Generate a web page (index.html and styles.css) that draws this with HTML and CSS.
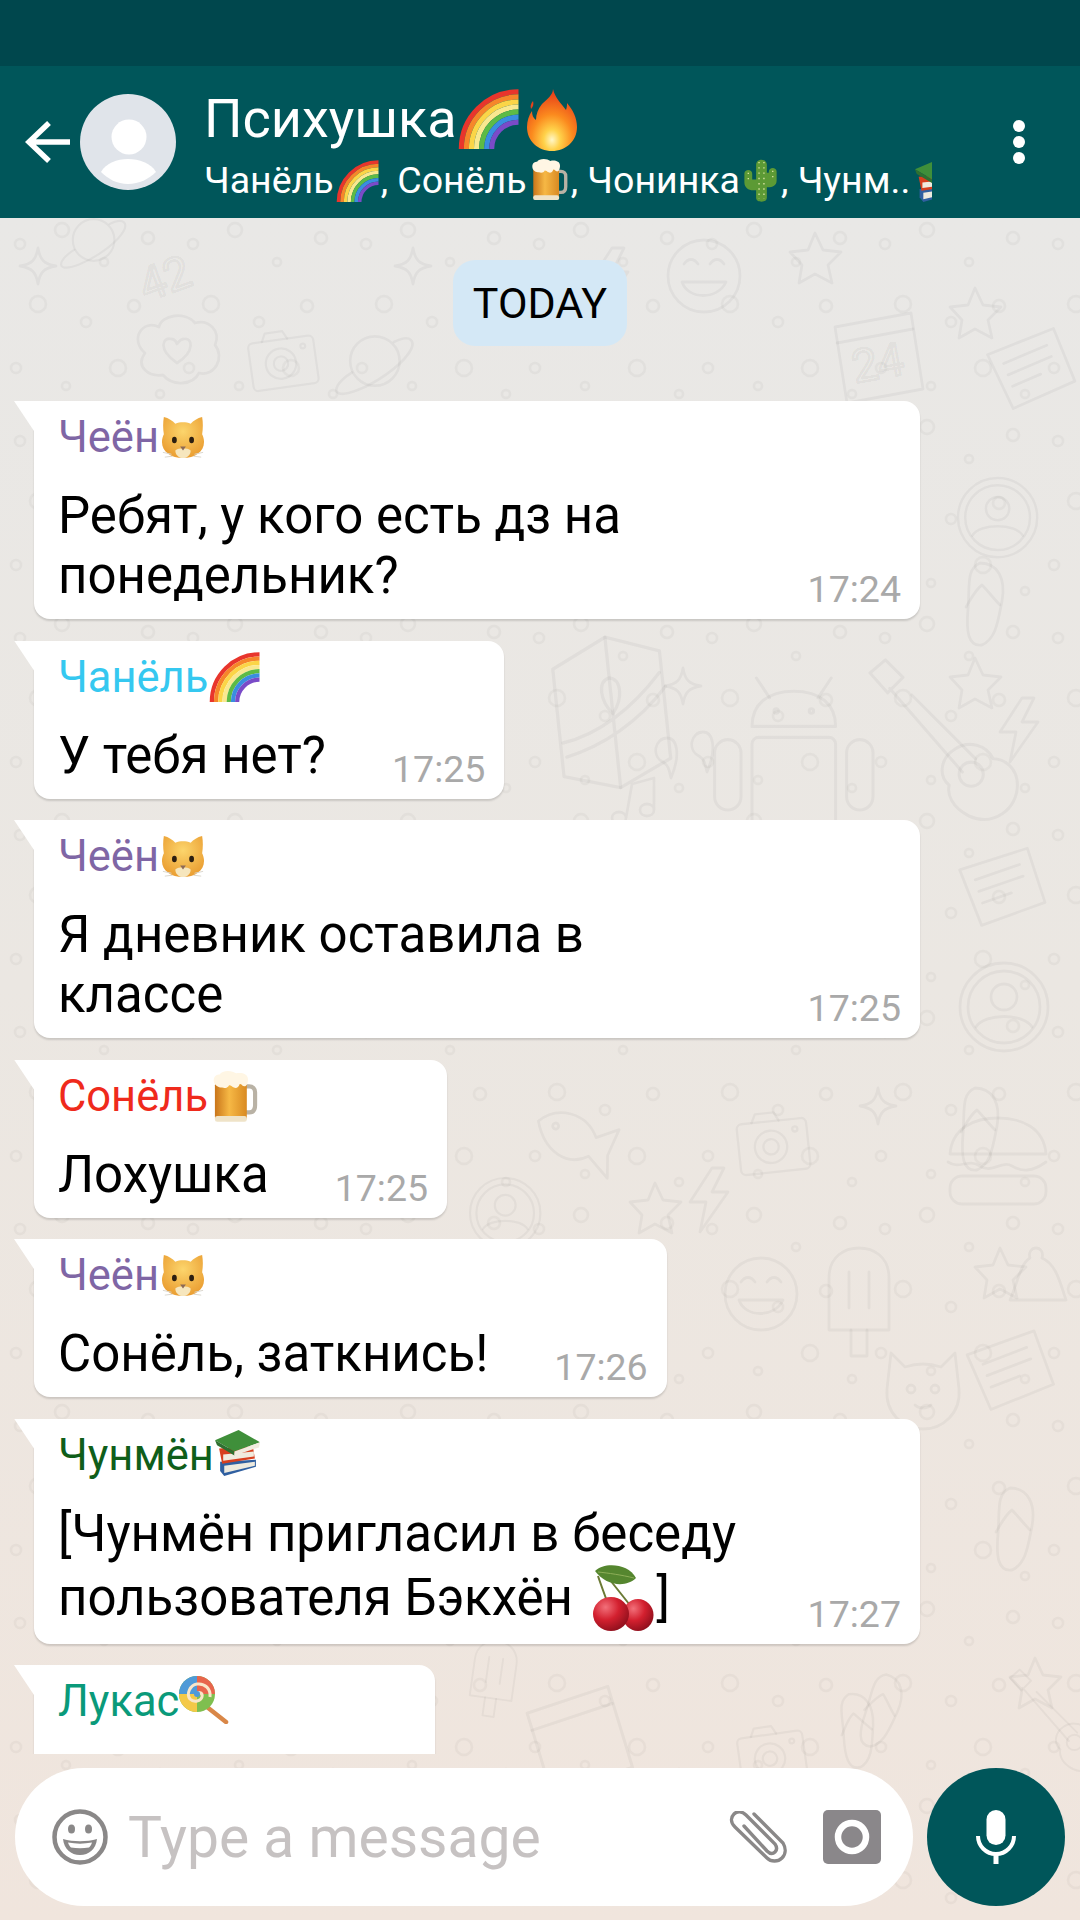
FILE: index.html
```html
<!DOCTYPE html>
<html lang="en">
<head>
  <meta charset="UTF-8" />
  <title>Психушка</title>
  <link rel="stylesheet" href="styles.css">
</head>
<body>

<!-- emoji drawn once, used everywhere -->
<svg class="sprite" xmlns="http://www.w3.org/2000/svg">
  <defs>
    <radialGradient id="g-fire" cx="50%" cy="82%" r="75%">
      <stop offset="0" stop-color="#fff7c8"/>
      <stop offset=".22" stop-color="#ffd24a"/>
      <stop offset=".55" stop-color="#fb8a1e"/>
      <stop offset="1" stop-color="#e8421a"/>
    </radialGradient>
    <linearGradient id="g-beer" x1="0" y1="0" x2="1" y2="0">
      <stop offset="0" stop-color="#c9751a"/>
      <stop offset=".45" stop-color="#f6b845"/>
      <stop offset="1" stop-color="#d98a22"/>
    </linearGradient>
    <radialGradient id="g-cat" cx="50%" cy="35%" r="70%">
      <stop offset="0" stop-color="#fcd56c"/>
      <stop offset="1" stop-color="#e99a2e"/>
    </radialGradient>
    <radialGradient id="g-cherry" cx="35%" cy="30%" r="75%">
      <stop offset="0" stop-color="#f2707a"/>
      <stop offset=".5" stop-color="#d3202f"/>
      <stop offset="1" stop-color="#8e0f1c"/>
    </radialGradient>
    <symbol id="e-rainbow" viewBox="0 0 64 64">
      <g fill="none" stroke-width="5.400">
        <path stroke="#e8352c" d="M3 64A61 61 0 0 1 64 3"/>
        <path stroke="#f6862a" d="M8.400 64A55.600 55.600 0 0 1 64 8.400"/>
        <path stroke="#fbd547" d="M13.800 64A50.200 50.200 0 0 1 64 13.800"/>
        <path stroke="#f9e88f" d="M19.200 64A44.800 44.800 0 0 1 64 19.200"/>
        <path stroke="#5dbb45" d="M24.600 64A39.400 39.400 0 0 1 64 24.600"/>
        <path stroke="#3a8ee0" d="M30 64A34 34 0 0 1 64 30"/>
        <path stroke="#7a4bc8" d="M35.400 64A28.600 28.600 0 0 1 64 35.400"/>
      </g>
    </symbol>
    <symbol id="e-fire" viewBox="0 0 50 62">
      <path fill="url(#g-fire)" d="M26 0c2 9 8 14 13 21 1-3 1-5 1-7 6 7 10 15 10 24 0 14-11 24-25 24S0 52 0 38c0-6 2-12 5-16 0 4 1 7 4 9 0-6 2-11 6-16 5-5 11-9 11-15z"/>
      <path fill="#e8421a" d="M6 12c1 3 0 6-2 8-1-3 0-6 2-8z"/>
    </symbol>
    <symbol id="e-beer" viewBox="0 0 38 44">
      <path fill="none" stroke="#b9b2a5" stroke-width="3.500" d="M27 13h4c3 0 5 2 5 5v11c0 4-2 6-5 6h-4"/>
      <rect x="2" y="9" width="27" height="33" rx="3" fill="url(#g-beer)"/>
      <rect x="2" y="38" width="27" height="5" rx="2" fill="#efe3c8"/>
      <path fill="#fff6e4" d="M1 8c0-4 3-5 5-5 1-2 4-3 7-3 3 0 5 1 7 2 4-1 10 0 10 5 0 3-1 6-3 6-2 0-2-2-4-2-1 3-3 4-5 3-2-1-2-2-4-2-1 2-3 3-6 2-3 0-7-2-7-6z"/>
    </symbol>
    <symbol id="e-cactus" viewBox="0 0 34 44">
      <path fill="#5c9a35" d="M12 6c0-7 11-7 11 0v8l2 0v-1c0-5 8-5 8 0v9c0 5-4 7-9 7h-1v11c0 5-11 5-11 0v-8h-3c-5 0-9-3-9-8v-9c0-5 8-5 8 0v6l4 0z"/>
      <path fill="none" stroke="#d8e4a0" stroke-width="1.400" stroke-dasharray="1.400 4" d="M15 3v38M20 3v38M4 14v10M29 12v10"/>
    </symbol>
    <symbol id="e-books" viewBox="0 0 45 45">
      <path fill="#2f5fa0" d="M6 31 41 29 41 36 10 45 6 40z"/>
      <path fill="#eeeade" d="M10 35 40 31 40 35 10 42z"/>
      <path fill="#d8401f" d="M5 18 38 16 40 28 8 33z"/>
      <path fill="#f0ecdf" d="M9 24 39 21 39 26 9 30z"/>
      <path fill="#3f8f3a" d="M1 10 24 0 45 12 20 21z"/>
      <path fill="#2f7030" d="M1 10 20 21 20 25 3 15z"/>
      <path fill="#f0ecdf" d="M20 21 45 12 44 17 20 25z"/>
    </symbol>
    <symbol id="e-cat" viewBox="0 0 46 48">
      <path fill="url(#g-cat)" d="M3 2c5 1 9 4 12 7 5-2 11-2 16 0 3-3 7-6 12-7 1 6 1 12 0 18 1 2 2 5 2 8 0 11-10 17-22 17S1 39 1 28c0-3 1-6 2-8-1-6-1-12 0-18z"/>
      <ellipse cx="14" cy="26" rx="2.500" ry="3.400" fill="#2c1e10"/>
      <ellipse cx="32" cy="26" rx="2.500" ry="3.400" fill="#2c1e10"/>
      <path fill="#f6e6bd" d="M15 37c3-3 13-3 16 0 0 5-4 8-8 8s-8-3-8-8z"/>
      <path fill="#8c6b58" d="M20 33h6l-3 4z"/>
      <path fill="none" stroke="#d9d5cc" stroke-width="1" d="M2 39l9 2M44 39l-9 2M4 44l8-1M42 44l-8-1"/>
    </symbol>
    <symbol id="e-cherry" viewBox="0 0 62 67">
      <path fill="none" stroke="#6b7a35" stroke-width="2" d="M6 12c4 12 8 22 11 31M18 16c8 10 16 20 23 29"/>
      <path fill="#55862f" d="M3 7C12-2 36-1 44 14 34 24 14 22 3 7z"/>
      <path fill="none" stroke="#8dae58" stroke-width="1" d="M6 8c10 1 24 3 36 6"/>
      <ellipse cx="46" cy="51" rx="15.500" ry="16" fill="url(#g-cherry)"/>
      <ellipse cx="19" cy="50" rx="18" ry="17" fill="url(#g-cherry)"/>
    </symbol>
    <symbol id="e-lolly" viewBox="0 0 50 48">
      <path stroke="#d98748" stroke-width="4.500" stroke-linecap="round" d="M28 31 47 46"/>
      <circle cx="18" cy="18" r="18" fill="#7fbf4f"/>
      <path fill="#e8654c" d="M18 0a18 18 0 0 1 18 18H18z"/>
      <path fill="#f4c948" d="M18 36A18 18 0 0 1 0 18h18z"/>
      <path fill="#4f9ad8" d="M0 18A18 18 0 0 1 18 0v18z"/>
      <path fill="none" stroke="#f9e6c9" stroke-width="3" d="M18 18c2-3 6-1 5 3-1 4-8 6-12 2-4-5 0-14 7-15 8-1 14 5 13 13"/>
      <circle cx="18" cy="18" r="3" fill="#4f9ad8"/>
    </symbol>
  </defs>
</svg>

<div class="status-bar"></div>

<header class="app-bar">
  <svg class="back" viewBox="0 0 45 44"><path fill="none" stroke="#fff" stroke-width="5.500" d="M24 3 4 22l20 19M4 22h41"/></svg>
  <svg class="avatar" viewBox="0 0 96 96">
    <circle cx="48" cy="48" r="48" fill="#e0e4ea"/>
    <circle cx="49" cy="43" r="17.500" fill="#fff"/>
    <path fill="#fff" d="M21 78c5-9 16-13 27-13s23 4 28 13c-7 7-17 12-28 12s-20-5-27-12z"/>
  </svg>
  <div class="titles">
    <div class="title">Психушка<svg class="emoji e-title-rainbow"><use href="#e-rainbow"/></svg><svg class="emoji e-title-fire"><use href="#e-fire"/></svg></div>
    <div class="subtitle">Чанёль<svg class="emoji e-sub"><use href="#e-rainbow"/></svg>, Сонёль<svg class="emoji e-sub e-sub-beer"><use href="#e-beer"/></svg>, Чонинка<svg class="emoji e-sub e-sub-cactus"><use href="#e-cactus"/></svg>, Чунм..<svg class="emoji e-sub e-sub-books"><use href="#e-books"/></svg></div>
  </div>
  <svg class="menu" viewBox="0 0 14 44" fill="#fff"><circle cx="7" cy="6" r="6"/><circle cx="7" cy="22" r="6"/><circle cx="7" cy="38" r="6"/></svg>
</header>

<main class="chat">
  <!-- wallpaper doodles -->
  <svg class="wallpaper" viewBox="0 0 1080 1702">
    <defs>
      <pattern id="dots" width="173" height="197" patternUnits="userSpaceOnUse">
        <g fill="none" stroke="#000" stroke-opacity=".036" stroke-width="2.500">
          <circle cx="20" cy="26" r="5"/><circle cx="62" cy="12" r="7"/><circle cx="104" cy="44" r="4"/>
          <circle cx="148" cy="20" r="6"/><circle cx="38" cy="86" r="8"/><circle cx="86" cy="104" r="5"/>
          <circle cx="134" cy="88" r="6"/><circle cx="16" cy="150" r="5"/><circle cx="66" cy="168" r="4"/>
          <circle cx="118" cy="150" r="8"/><circle cx="160" cy="176" r="4"/>
        </g>
      </pattern>
      <g id="d-camera"><rect x="0" y="14" width="82" height="60" rx="6"/><path d="M18 14l5-10h22l5 10"/><circle cx="38" cy="44" r="19"/><circle cx="38" cy="44" r="9"/><circle cx="68" cy="26" r="3"/></g>
      <g id="d-android"><path d="M20 44c0-20 14-32 38-32s38 12 38 32z"/><path d="M36 18 24 0M80 18 92 0"/><circle cx="42" cy="30" r="2"/><circle cx="74" cy="30" r="2"/><rect x="20" y="54" width="76" height="86" rx="6"/><rect x="-14" y="56" width="24" height="64" rx="12"/><rect x="106" y="56" width="24" height="64" rx="12"/></g>
      <g id="d-guitar"><path d="M0 0l14-12 16 16-14 14zM18 14l66 76"/><path d="M38 20 96 78"/><path d="M76 70c14-10 30-4 36 8 10 0 22 8 22 24 0 22-22 38-44 28-16-8-20-20-18-28-10-8-8-24 4-32z"/><circle cx="92" cy="92" r="11"/></g>
      <g id="d-map"><path d="M0 22 46 0l44 16 0 90-44 20L0 112z"/><path d="M46 0v126M2 84c30-4 60-22 86-50M4 96c30-6 62-22 88-50"/><path d="M46 64c-10-12-10-28 0-30 10 2 10 18 0 30z"/></g>
      <g id="d-star"><path d="M25 0l8 17 18 2-13 13 4 18-17-9-16 9 3-18L0 19l18-2z"/></g>
      <g id="d-spark"><path d="M18 0c2 12 6 16 18 18-12 2-16 6-18 18-2-12-6-16-18-18 12-2 16-6 18-18z"/></g>
      <g id="d-planet"><circle cx="42" cy="40" r="26"/><path d="M18 52C2 62-2 72 4 74c8 3 30-6 50-20s32-30 26-36c-3-3-10-2-18 2"/></g>
      <g id="d-heart"><path d="M10 40C-6 26 8 6 24 14c2-12 26-16 36-4 14-4 26 8 20 22 10 12 0 32-16 28-6 12-26 14-36 2C14 64 0 54 10 40z"/><path d="M42 50c-20-14-14-26-6-24 3 0 5 2 6 5 2-3 4-5 7-5 8-2 12 12-7 24z"/></g>
      <g id="d-smile"><circle cx="36" cy="36" r="36"/><path d="M14 42c6 18 36 18 44 0zM16 24c4-6 10-6 14 0M42 24c4-6 10-6 14 0"/></g>
      <g id="d-cal"><path d="M0 14 76 0l12 76-76 14z"/><path d="M2 30 78 16"/></g>
      <g id="d-burger"><path d="M0 36C2 10 24 0 48 0s46 10 48 36z"/><path d="M-2 44c12 8 20-4 32 4s22-6 32 0 20 6 34-4"/><rect x="0" y="58" width="96" height="28" rx="12"/></g>
      <g id="d-card"><path d="M0 12 70 0l10 56-66 14z"/><path d="M14 24l46-9M16 36l46-9M18 48l30-6"/></g>
      <g id="d-bolt"><path d="M22 0 0 34h16l-6 30 28-40H22l12-24z"/></g>
      <g id="d-ring"><circle cx="44" cy="44" r="44"/><circle cx="44" cy="44" r="36"/><circle cx="44" cy="34" r="13"/><path d="M16 64c8-14 48-14 56 0"/></g>
      <g id="d-flip"><path d="M30 0c18 0 26 16 22 38-4 20-6 38-20 44-14 2-16-14-14-36C20 22 16 6 30 0z"/><path d="M16 44c6-10 10-18 16-22 6 6 12 14 18 20"/></g>
      <g id="d-fish"><path d="M0 24C14 4 44 2 60 24l20-14-4 28 6 22-24-16C40 60 14 52 0 24z"/><circle cx="18" cy="24" r="3"/></g>
      <g id="d-pop"><path d="M4 30C4 8 20 0 34 0s30 8 30 30v52H4z"/><path d="M26 82v26h16V82M24 24v36M44 24v36"/></g>
      <g id="d-note"><path d="M0 40c0-8 14-8 14 0s-14 8-14 0zM28 32c0-8 14-8 14 0s-14 8-14 0zM14 40 20 6 42 0 42 32"/></g>
      <g id="d-bell"><path d="M26 0c4 0 8 4 6 10 14 6 18 24 24 42H0C8 34 10 16 20 10 18 4 22 0 26 0z"/></g>
      <g id="d-cat"><path d="M6 0l14 14c12-4 24-4 36 0L70 0l4 36c2 24-16 40-36 40S0 60 2 36z"/><circle cx="26" cy="36" r="4"/><circle cx="50" cy="36" r="4"/><path d="M30 52c4 4 12 4 16 0"/></g>
      <g id="d-quote"><path d="M12 0c10 0 14 16 4 40-2-8-2-12-8-16-12-6-8-24 4-24zM48 -6c10 0 14 16 4 40-2-8-2-12-8-16-12-6-8-24 4-24z"/></g>
    </defs>
    <rect width="1080" height="1702" fill="url(#dots)"/>
    <g fill="none" stroke="#000" stroke-opacity=".038" stroke-width="2.800" stroke-linejoin="round" stroke-linecap="round">
      <use href="#d-spark" x="20" y="30"/>
      <use href="#d-heart" transform="translate(135 95)"/>
      <use href="#d-camera" transform="translate(246 115) rotate(-8) scale(.8)"/>
      <use href="#d-planet" transform="translate(335 105) scale(.95)"/>
      <use href="#d-spark" transform="translate(395 30)"/>
      <use href="#d-smile" transform="translate(668 22)"/>
      <use href="#d-cal" transform="translate(835 95)"/>
      <use href="#d-star" transform="translate(950 70)"/>
      <use href="#d-card" transform="translate(985 125) rotate(-12)"/>
      <use href="#d-planet" transform="translate(60 -10) scale(.8)"/>
      <use href="#d-card" transform="translate(500 50) rotate(12) scale(.8)"/>
      <use href="#d-bolt" transform="translate(590 30)"/>
      <use href="#d-star" transform="translate(790 15)"/>
      <text x="146" y="84" font-family="Roboto, sans-serif" font-size="46" transform="rotate(-20 146 84)">42</text>
      <text x="855" y="165" font-family="Roboto, sans-serif" font-size="46" transform="rotate(-10 855 165)">24</text>

      <use href="#d-ring" transform="translate(958 260) scale(.9)"/>
      <use href="#d-flip" transform="translate(950 345)"/>

      <use href="#d-map" transform="translate(550 425) rotate(-6) scale(1.2)"/>
      <use href="#d-android" transform="translate(730 460) scale(1.1)"/>
      <use href="#d-guitar" transform="translate(870 455) scale(1.1)"/>
      <use href="#d-quote" transform="translate(655 520)"/>
      <use href="#d-note" transform="translate(612 560)"/>
      <use href="#d-spark" transform="translate(665 450)"/>
      <use href="#d-star" transform="translate(950 440)"/>
      <use href="#d-bolt" transform="translate(1000 480)"/>

      <use href="#d-card" transform="translate(958 640) rotate(-8)"/>
      <use href="#d-ring" transform="translate(960 745)"/>
      <use href="#d-flip" transform="translate(945 870)"/>

      <use href="#d-fish" transform="translate(545 880) rotate(16)"/>
      <use href="#d-camera" transform="translate(735 895) rotate(-6) scale(.85)"/>
      <use href="#d-burger" transform="translate(950 900)"/>
      <use href="#d-spark" transform="translate(860 870)"/>
      <use href="#d-ring" transform="translate(470 960) scale(.8)"/>
      <use href="#d-star" transform="translate(630 965)"/>
      <use href="#d-bolt" transform="translate(690 950)"/>

      <use href="#d-pop" transform="translate(825 1030)"/>
      <use href="#d-smile" transform="translate(725 1040)"/>
      <use href="#d-star" transform="translate(975 1030)"/>
      <use href="#d-cat" transform="translate(885 1135)"/>
      <use href="#d-card" transform="translate(965 1125) rotate(-10)"/>
      <use href="#d-flip" transform="translate(980 1270)"/>
      <use href="#d-bell" transform="translate(1010 1030)"/>

      <use href="#d-cal" transform="translate(525 1480) rotate(-8) scale(1.1)"/>
      <use href="#d-camera" transform="translate(735 1510) rotate(-8) scale(.8)"/>
      <use href="#d-flip" transform="translate(822 1480) rotate(-8) scale(.9)"/>
      <use href="#d-flip" transform="translate(860 1450) rotate(14) scale(.9)"/>
      <use href="#d-guitar" transform="translate(1010 1460) scale(.7)"/>
      <use href="#d-pop" transform="translate(475 1420) rotate(8) scale(.7)"/>
      <use href="#d-star" transform="translate(1010 1440)"/>
    </g>
  </svg>

  <div class="messages">
    <div class="day-chip">TODAY</div>

    <div class="bubble wide">
      <div class="sender purple">Чеён<svg class="emoji e-cat"><use href="#e-cat"/></svg></div>
      <div class="msg-row">
        <div class="msg-text">Ребят, у кого есть дз на<br>понедельник?</div>
        <span class="time">17:24</span>
      </div>
    </div>

    <div class="bubble">
      <div class="sender sky">Чанёль<svg class="emoji e-rainbow"><use href="#e-rainbow"/></svg></div>
      <div class="msg-row">
        <div class="msg-text">У тебя нет?</div>
        <span class="time">17:25</span>
      </div>
    </div>

    <div class="bubble wide">
      <div class="sender purple">Чеён<svg class="emoji e-cat"><use href="#e-cat"/></svg></div>
      <div class="msg-row">
        <div class="msg-text">Я дневник оставила в<br>классе</div>
        <span class="time">17:25</span>
      </div>
    </div>

    <div class="bubble">
      <div class="sender red">Сонёль<svg class="emoji e-beer"><use href="#e-beer"/></svg></div>
      <div class="msg-row">
        <div class="msg-text">Лохушка</div>
        <span class="time">17:25</span>
      </div>
    </div>

    <div class="bubble">
      <div class="sender purple">Чеён<svg class="emoji e-cat"><use href="#e-cat"/></svg></div>
      <div class="msg-row">
        <div class="msg-text">Сонёль, заткнись!</div>
        <span class="time">17:26</span>
      </div>
    </div>

    <div class="bubble wide">
      <div class="sender green">Чунмён<svg class="emoji e-books"><use href="#e-books"/></svg></div>
      <div class="msg-row">
        <div class="msg-text">[Чунмён пригласил в беседу<br>пользователя Бэкхён <svg class="cherry"><use href="#e-cherry"/></svg>]</div>
        <span class="time">17:27</span>
      </div>
    </div>

    <div class="bubble cut-off">
      <div class="sender teal">Лукас<svg class="emoji e-lolly"><use href="#e-lolly"/></svg></div>
    </div>
  </div>

  <div class="composer">
    <div class="input-pill">
      <svg class="icon-smile" viewBox="0 0 56 56">
        <circle cx="28" cy="28" r="25.500" fill="none" stroke="#8a8888" stroke-width="4.500"/>
        <ellipse cx="19.500" cy="20" rx="3.500" ry="4.500" fill="#8a8888"/>
        <ellipse cx="36.500" cy="20" rx="3.500" ry="4.500" fill="#8a8888"/>
        <path fill="#8a8888" d="M11 30c10 3 24 3 34 0-1 10-8 16-17 16s-16-6-17-16z"/>
        <path fill="#fff" d="M16 33.500c8 1.500 16 1.500 24 0-1 3-2 4-3 5-6 1-12 1-18 0-1-1-2-2-3-5z"/>
      </svg>
      <span class="placeholder">Type a message</span>
      <svg class="icon-clip" viewBox="0 0 58 52">
        <path fill="none" stroke="#8a8888" stroke-width="3.400" stroke-linecap="round" d="M25 3 54 32c3 5 3 11-1 15s-11 4-15 0L6 16C1 11 2 6 5 3s8-3 12 1l29 29c2 3 2 6 0 8s-5 2-8-1L15 15"/>
      </svg>
      <svg class="icon-camera" viewBox="0 0 58 54">
        <rect width="58" height="54" rx="5" fill="#8a878a"/>
        <circle cx="29" cy="27" r="14" fill="#8a878a" stroke="#fff" stroke-width="6.500"/>
      </svg>
    </div>
    <div class="mic-btn">
      <svg class="icon-mic" viewBox="0 0 40 54">
        <rect x="10.500" y="0" width="19" height="35" rx="9.500" fill="#fff"/>
        <path fill="none" stroke="#fff" stroke-width="4" d="M2 26c0 10 8 18 18 18s18-8 18-18"/>
        <rect x="17.500" y="42" width="5" height="12" fill="#fff"/>
      </svg>
    </div>
  </div>
</main>

</body>
</html>
```

FILE: styles.css
```css
html, body {
  margin: 0;
  padding: 0;
  font-family: Roboto, sans-serif;
  background: #ece6e0;
}

body {
  width: 1080px;
  height: 1920px;
  display: flex;
  flex-direction: column;
  overflow: hidden;
}

.sprite {
  display: block;
  width: 0;
  height: 0;
}

.status-bar {
  height: 66px;
  flex: none;
  background: #00474d;
}

.app-bar {
  height: 152px;
  flex: none;
  display: flex;
  align-items: center;
  padding: 0 54px 0 25px;
  background: #00565a;
  color: white;
}

.back {
  width: 45px;
  height: 44px;
  flex: none;
}

.avatar {
  width: 96px;
  height: 96px;
  flex: none;
  margin-left: 10px;
}

.titles {
  width: 728px;
  margin-left: 28px;
  padding-top: 8px;
}

.title {
  font-size: 54px;
  line-height: 58px;
  height: 58px;
  white-space: nowrap;
}

.subtitle {
  font-size: 37.5px;
  line-height: 44px;
  height: 50px;
  margin-top: 10px;
  margin-bottom: -6px;
  white-space: nowrap;
  overflow: hidden;
}

.menu {
  width: 14px;
  height: 44px;
  flex: none;
  margin-left: auto;
}

/* emoji never push the line box around, vertical-align counts from the margin edge */
.emoji {
  margin-top: -14px;
  margin-bottom: -14px;
}

.e-title-rainbow { width: 63px; height: 60px; vertical-align: 2px; }
.e-title-fire    { width: 50px; height: 62px; vertical-align: 0; margin-left: 7px; }
.e-sub           { width: 47px; height: 42px; vertical-align: 5px; }
.e-sub-beer      { width: 37px; height: 42px; vertical-align: 6px; margin-left: 4px; margin-right: 3px; }
.e-sub-cactus    { width: 34px; height: 43px; margin-left: 4px; margin-right: 3px; }
.e-sub-books     { width: 44px; height: 42px; margin-left: 3px; }

.chat {
  flex: 1;
  min-height: 0;
  position: relative;
  display: flex;
  flex-direction: column;
  background: linear-gradient(#e9e8e6, #ebe7e2 45%, #f0e5dd);
}

.wallpaper {
  position: absolute;
  top: 0;
  left: 0;
  width: 1080px;
  height: 1702px;
}

.messages {
  position: relative;
  height: 1536px;
  flex: none;
  overflow: hidden;
  display: flex;
  flex-direction: column;
  align-items: flex-start;
  gap: 21.5px;
  padding: 42px 0 0 34px;
  box-sizing: border-box;
}

.day-chip {
  flex: none;
  align-self: center;
  width: 174px;
  height: 86px;
  margin: 0 0 33.5px -34px;
  display: flex;
  align-items: center;
  justify-content: center;
  background: #d4e8f6;
  border-radius: 22px;
  font-size: 43px;
  color: black;
}

.bubble {
  position: relative;
  flex: none;
  padding: 13px 19px 13px 24px;
  background: white;
  border-radius: 0 16px 16px 16px;
  box-shadow: 0 2px 2px rgba(0, 0, 0, 0.14);
}

.bubble::before {
  content: "";
  position: absolute;
  top: 0;
  left: -20px;
  width: 20px;
  height: 30px;
  background: white;
  clip-path: polygon(0 0, 100% 0, 100% 100%);
}

.wide {
  width: 886px;
  box-sizing: border-box;
}

.cut-off {
  width: 401px;
  height: 200px;
  box-sizing: border-box;
}

.sender {
  height: 48px;
  font-size: 43.5px;
  line-height: 48px;
  white-space: nowrap;
}

.purple { color: #7f66a5; }
.sky    { color: #35c8f0; }
.red    { color: #ef2a1c; }
.green  { color: #0f5e1a; }
.teal   { color: #0a9a7a; }

.e-cat     { width: 44px; height: 46px; vertical-align: 5px; margin-left: 2px; }
.e-rainbow { width: 53px; height: 50px; vertical-align: 4px; }
.e-beer    { width: 46px; height: 52px; vertical-align: 2px; margin-left: 4px; }
.e-books   { width: 46px; height: 46px; vertical-align: 8px; }
.e-lolly   { width: 50px; height: 48px; vertical-align: 6px; }

.msg-row {
  display: flex;
  justify-content: space-between;
  align-items: flex-end;
  gap: 66px;
  margin-top: 24px;
}

.msg-text {
  font-size: 51px;
  line-height: 60px;
  color: black;
  white-space: nowrap;
}

.cherry {
  width: 62px;
  height: 67px;
  vertical-align: -16px;
  margin-left: 6px;
  margin-right: 3px;
}

.time {
  flex: none;
  font-size: 37.5px;
  line-height: 40px;
  margin-bottom: -3px;
  color: #a9a9a9;
}

.composer {
  position: relative;
  flex: none;
  display: flex;
  gap: 14px;
  margin: 14px 15px 14px 15px;
}

.input-pill {
  flex: 1;
  height: 138px;
  display: flex;
  align-items: center;
  padding: 0 32px 0 37px;
  background: white;
  border-radius: 69px;
}

.icon-smile {
  width: 56px;
  height: 56px;
  flex: none;
}

.placeholder {
  margin-left: 20px;
  font-size: 57px;
  color: #c6c2c2;
}

.icon-clip {
  width: 58px;
  height: 52px;
  flex: none;
  margin-left: auto;
}

.icon-camera {
  width: 58px;
  height: 54px;
  flex: none;
  margin-left: 36px;
}

.mic-btn {
  width: 138px;
  height: 138px;
  flex: none;
  display: flex;
  align-items: center;
  justify-content: center;
  border-radius: 50%;
  background: #00565a;
}

.icon-mic {
  width: 40px;
  height: 54px;
}
```
